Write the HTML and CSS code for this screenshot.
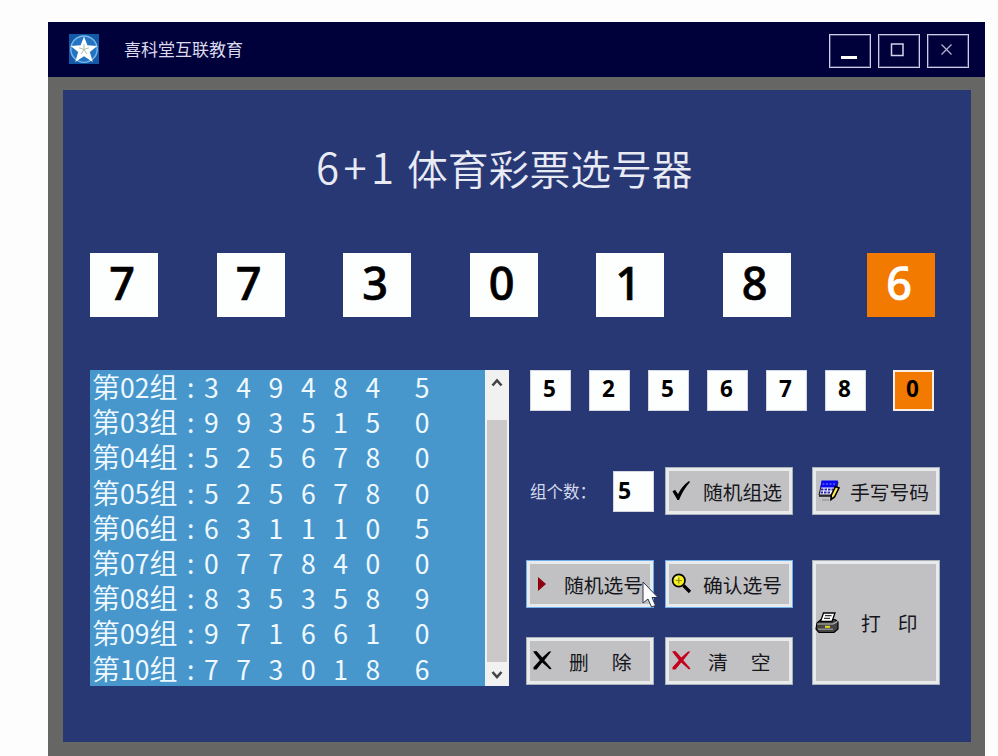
FILE: index.html
```html
<!DOCTYPE html>
<html lang="zh-CN">
<head>
<meta charset="utf-8">
<title>喜科堂互联教育</title>
<link rel="stylesheet" href="styles.css">
</head>
<body>
<div class="window">
  <header class="titlebar">
    <svg class="logo" viewBox="0 0 30 30">
      <rect width="30" height="30" fill="#1458a8"/>
      <circle cx="15" cy="15.2" r="13.2" fill="#2474c4" stroke="#7db8e6" stroke-width="1.4"/>
      <path d="M15 2.5 18.4 11.3 28.3 12 20.8 18 23.8 28 15 22.3 6.2 28 9.2 18 1.7 12 11.6 11.3Z" fill="#fff"/>
      <path d="M15 15.5V10M15 15.5 20 13.8M15 15.5 18 20M15 15.5 12 20M15 15.5 10 13.8" stroke="#a9bfae" stroke-width="1"/>
    </svg>
    <span class="caption">喜科堂互联教育</span>
    <div class="controls">
      <span class="control"><svg viewBox="0 0 42 34"><path d="M12 23.500H28" stroke="#fff" stroke-width="3"/></svg></span>
      <span class="control"><svg viewBox="0 0 42 34"><rect x="13.500" y="10" width="11.500" height="11.500" fill="none" stroke="#d6d4ea" stroke-width="1.500"/></svg></span>
      <span class="control"><svg viewBox="0 0 42 34"><path d="M14.500 10.500 24.500 20.500M24.500 10.500 14.500 20.500" stroke="#b9b7d2" stroke-width="1.200"/></svg></span>
    </div>
  </header>
  <main class="panel">
    <h1 class="heading"><span class="heading-num">6+1</span><span>体育彩票选号器</span></h1>
    <div class="balls">
      <span class="ball">7</span><span class="ball">7</span><span class="ball">3</span><span class="ball">0</span><span class="ball">1</span><span class="ball">8</span><span class="ball special">6</span>
    </div>
    <div class="content">
      <div class="list">
        <div class="rows">
          <div class="row"><span class="group">第<b>02</b>组</span><i>:</i><span>3</span><span>4</span><span>9</span><span>4</span><span>8</span><span>4</span><span>5</span></div>
          <div class="row"><span class="group">第<b>03</b>组</span><i>:</i><span>9</span><span>9</span><span>3</span><span>5</span><span>1</span><span>5</span><span>0</span></div>
          <div class="row"><span class="group">第<b>04</b>组</span><i>:</i><span>5</span><span>2</span><span>5</span><span>6</span><span>7</span><span>8</span><span>0</span></div>
          <div class="row"><span class="group">第<b>05</b>组</span><i>:</i><span>5</span><span>2</span><span>5</span><span>6</span><span>7</span><span>8</span><span>0</span></div>
          <div class="row"><span class="group">第<b>06</b>组</span><i>:</i><span>6</span><span>3</span><span>1</span><span>1</span><span>1</span><span>0</span><span>5</span></div>
          <div class="row"><span class="group">第<b>07</b>组</span><i>:</i><span>0</span><span>7</span><span>7</span><span>8</span><span>4</span><span>0</span><span>0</span></div>
          <div class="row"><span class="group">第<b>08</b>组</span><i>:</i><span>8</span><span>3</span><span>5</span><span>3</span><span>5</span><span>8</span><span>9</span></div>
          <div class="row"><span class="group">第<b>09</b>组</span><i>:</i><span>9</span><span>7</span><span>1</span><span>6</span><span>6</span><span>1</span><span>0</span></div>
          <div class="row"><span class="group">第<b>10</b>组</span><i>:</i><span>7</span><span>7</span><span>3</span><span>0</span><span>1</span><span>8</span><span>6</span></div>
        </div>
        <div class="scrollbar">
          <svg class="arrow" viewBox="0 0 24 24"><path d="M7.500 15.500 12 10.500 16.500 15.500" fill="none" stroke="#444" stroke-width="2.600"/></svg>
          <div class="thumb"></div>
          <svg class="arrow" viewBox="0 0 24 24"><path d="M7.500 10 12 15 16.500 10" fill="none" stroke="#444" stroke-width="2.600"/></svg>
        </div>
      </div>
      <div class="side">
        <div class="picks">
          <span class="pick">5</span><span class="pick">2</span><span class="pick">5</span><span class="pick">6</span><span class="pick">7</span><span class="pick">8</span><span class="pick special">0</span>
        </div>
        <div class="actions">
          <div class="count"><label>组个数：</label><span class="field">5</span></div>
          <div class="btn"><svg class="icon" viewBox="0 0 24 24"><path d="M2.500 12.500 5 10.800 8 15Q12 7 19 2L20 3Q13 11 9 21H7.500Z" fill="#000"/></svg><span>随机组选</span></div>
          <div class="btn"><svg class="icon" viewBox="0 0 24 24">
            <path d="M5 3H21L18 16H2Z" fill="#f4f4ff" stroke="#111" stroke-width="1"/>
            <path d="M4.500 1.500H21L19.500 8.500H3.500Z" fill="#0808ef"/>
            <path d="M5.500 5H19" stroke="#8c8cff" stroke-width="1.200" stroke-dasharray="2 1.500"/>
            <path d="M4 10.500H16M3.500 13.500H14" stroke="#2828b8" stroke-width="2" stroke-dasharray="2.500 1"/>
            <path d="M2 17H14" stroke="#111" stroke-width="1.500"/><path d="M5 21H12" stroke="#888"/>
            <path d="M18.500 7.500 22 9 17.500 18 14 20.500 14.300 16Z" fill="#ffe653" stroke="#000" stroke-width="1.600"/>
          </svg><span>手写号码</span></div>
          <div class="btn focus"><svg class="icon" viewBox="0 0 24 24"><path d="M7 5 15 12 7 19Z" fill="#8c0010"/></svg><span>随机选号</span></div>
          <div class="btn focus"><svg class="icon" viewBox="0 0 24 24"><path d="M13.500 13.500 20 20" stroke="#000" stroke-width="3.200"/><circle cx="8.800" cy="8.500" r="6.200" fill="#f5ef1c" stroke="#000" stroke-width="1.700"/><path d="M5.800 8.500H11.800M8.800 5.500V11.500" stroke="#8c8c10" stroke-width="1.200"/><path d="M5 7 7 5" stroke="#fff" stroke-width="1.300"/></svg><span>确认选号</span></div>
          <div class="btn print"><svg class="icon" viewBox="0 0 24 24">
            <path d="M2 12 6 8.500H20L23 11V18L19 21.500H4L1 18Z" fill="#444" stroke="#000" stroke-width="1.200"/>
            <path d="M8.500 2H20L17 10.500H5.500Z" fill="#fff" stroke="#000" stroke-width="1.300"/>
            <path d="M10 4.700H16.500M9 7.300H15" stroke="#333" stroke-width="1.200"/>
            <path d="M2 13H18L22.500 10.500" fill="none" stroke="#bbb" stroke-width="1.200"/>
            <path d="M3 18.200H18" stroke="#999" stroke-width="1.300"/><path d="M10 15.800H15" stroke="#e4dc20" stroke-width="2"/>
          </svg><span class="wide">打<u></u>印</span></div>
          <div class="btn"><svg class="icon" viewBox="0 0 24 24"><path d="M2 2.500 5.500 2 11.300 8.500 18 2.500 20.300 2.500 13.300 11.200 20.500 19.500 19 20.500 11.200 13.500 5.500 20.500 2.500 20.500 2.500 18.300 8.800 11.300Z" fill="#000"/></svg><span class="wide">删<u></u>除</span></div>
          <div class="btn"><svg class="icon" viewBox="0 0 24 24"><path d="M2 2.500 5.500 2 11.300 8.500 18 2.500 20.300 2.500 13.300 11.200 20.500 19.500 19 20.500 11.200 13.500 5.500 20.500 2.500 20.500 2.500 18.300 8.800 11.300Z" fill="#c4001c"/></svg><span class="wide">清<u></u>空</span></div>
        </div>
      </div>
    </div>
  </main>
</div>
<svg class="cursor" viewBox="0 0 17 28"><path d="M1 1V22L6 18 9.500 26 13.500 24.500 10 16.500H16Z" fill="#fff" stroke="#30344a" stroke-width="1"/></svg>
</body>
</html>
```
FILE: styles.css
```css
* { box-sizing: border-box; }
body {
  margin: 0;
  height: 756px;
  padding: 22px 13px 0 48px;
  overflow: hidden;
  background: #fdfdfd;
  font-family: "Noto Sans CJK SC", sans-serif;
}
svg { display: block; }
.window { width: 937px; height: 734px; background: #666765; }
.titlebar {
  height: 55px;
  padding: 0 16px 0 21px;
  display: flex;
  align-items: center;
  background: #00003a;
}
.logo { width: 30px; height: 30px; margin: -2px 25px 0 0; }
.caption { margin-top: -2px; font-size: 17px; line-height: 24px; color: #dcdaee; }
.controls { margin-left: auto; display: flex; gap: 7px; padding-top: 3px; }
.control { width: 42px; height: 34px; border: 1px solid #cfcde8; outline: 1px solid #cfcde855; outline-offset: -2px; }
.control svg { width: 42px; height: 34px; margin: -1px; }
.panel {
  width: 908px;
  height: 652px;
  margin: 13px 0 0 15px;
  padding: 49px 27px 0;
  background: #283874;
}
.heading {
  margin: 0;
  height: 60px;
  display: flex;
  gap: 12px;
  padding-left: 226px;
  font-size: 40.8px;
  line-height: 58px;
  font-weight: 350;
  color: #e8eaf4;
  white-space: nowrap;
}
.heading-num { width: 79px; font-size: 42px; line-height: 54px; letter-spacing: 4.5px; }
.balls { display: flex; gap: 58.5px; margin-top: 54px; }
.ball {
  width: 68px;
  height: 64px;
  padding-right: 4px;
  flex: none;
  background: #fdfefe;
  text-align: center;
  font: 500 45px/59px "Noto Sans", sans-serif;
  -webkit-text-stroke: 0.7px currentColor;
  color: #000;
}
.special { background: #f37a00; }
.ball.special { margin-left: 18px; color: #fff; }
.content { display: flex; gap: 17px; margin-top: 53px; }
.list { width: 419px; height: 316px; display: flex; background: #4797cd; }
.rows { flex: 1; }
.row {
  height: 35.2px;
  padding-left: 2px;
  display: grid;
  grid-template-columns: 91px 21px repeat(6, 32.3px) 32px;
  font-size: 26.5px;
  line-height: 33px;
  color: #f0f9ff;
}
.row i, .row b { font-style: normal; font-weight: 400; }
.row i { padding-left: 4px; }
.row .group { font-weight: 350; white-space: nowrap; font-size: 28px; }
.row b { font-size: 26.5px; }
.row > span:last-child { padding-left: 17px; }
.scrollbar {
  width: 24px;
  display: flex;
  flex-direction: column;
  justify-content: space-between;
  padding: 0 2px;
  background: #f1f1f1;
}
.arrow { width: 24px; height: 24px; margin: 0 -2px; }
.thumb { height: 242px; margin-top: 26px; background: #cac8c9; }
.side { width: 414px; }
.picks { display: flex; gap: 18px; padding-left: 4px; }
.pick {
  width: 41px;
  height: 41px;
  flex: none;
  padding-right: 2px;
  border: 1px solid #d4d7df;
  background: #fdfefe;
  text-align: center;
  font: 700 22.5px/36px "Noto Sans", sans-serif;
  color: #000;
}
.pick.special { margin-left: 9px; border: 2px solid #f7eee5; line-height: 34px; background: #f37a00; }
.actions {
  margin-top: 56px;
  display: grid;
  grid-template-columns: 128px 128px 128px;
  grid-template-rows: 48px 45px 48px 29px 48px;
  column-gap: 11px;
}
.btn:nth-child(3n) { margin: 0 -8px 0 8px; }
.btn:nth-child(4), .btn:nth-child(5) { grid-row: 3; }
.btn.print { grid-column: 3; grid-row: 3 / 6; }
.btn:nth-child(n+7) { grid-row: 5; }
.count { display: flex; align-items: center; padding-left: 4px; }
.count label { width: 83px; font-size: 16.5px; line-height: 46px; color: #d5daed; white-space: nowrap; }
.field {
  width: 41px;
  height: 41px;
  padding-left: 4px;
  border: 1px solid #d4d7df;
  background: #fdfefe;
  font: 700 23px/37px "Noto Sans", sans-serif;
}
.btn {
  display: flex;
  align-items: center;
  padding-left: 1px;
  border: 4px solid #e8ebec;
  outline: 1px solid #a9b0b8;
  outline-offset: -1px;
  background: #c1c1c3;
  font-size: 19.8px;
  line-height: 30px;
  color: #16161c;
  white-space: nowrap;
}
.btn.focus { outline-color: #6fb0ea; }
.btn span { padding-top: 1px; }
.icon { width: 24px; height: 24px; flex: none; margin-right: 9px; }
.wide { display: flex; padding-left: 5px; }
.wide u { width: 23px; }
.print .icon { margin-left: -2px; }
.print .wide { padding-left: 13px; }
.print .wide u { width: 17px; }
.cursor { position: absolute; left: 642px; top: 581px; width: 17px; height: 28px; }
```
